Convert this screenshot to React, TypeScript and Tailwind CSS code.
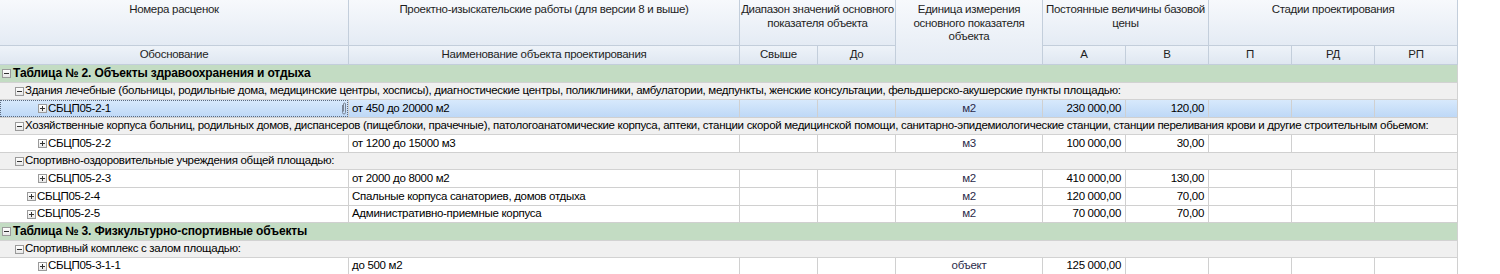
import React from "react";

const GRID =
  "grid w-[1458px] grid-cols-[349px_391px_78px_78px_147px_83px_83px_83px_83px_83px]";

const FONT = {
  fontFamily: '"Liberation Sans", Arial, sans-serif',
};

function Toggle({ open }: { open: boolean }) {
  return (
    <span className="inline-flex h-[9px] w-[9px] shrink-0 items-center justify-center border border-[#9a9a9a] bg-gradient-to-b from-white to-[#e8e8e8]">
      <svg width="7" height="7" viewBox="0 0 7 7">
        <rect x="1" y="3" width="5" height="1" fill="#333" />
        {!open && <rect x="3" y="1" width="1" height="5" fill="#333" />}
      </svg>
    </span>
  );
}

type Row =
  | { kind: "table"; text: string; h: string }
  | { kind: "group"; text: string; h: string }
  | {
      kind: "item";
      code: string;
      indent: string;
      name: string;
      unit: string;
      a: string;
      b: string;
      h: string;
      selected?: boolean;
    };

const rows: Row[] = [
  { kind: "table", text: "Таблица № 2. Объекты здравоохранения и отдыха", h: "h-[18px]" },
  {
    kind: "group",
    text: "Здания лечебные (больницы, родильные дома, медицинские центры, хосписы), диагностические центры, поликлиники, амбулатории, медпункты, женские консультации, фельдшерско-акушерские пункты площадью:",
    h: "h-[17px]",
  },
  {
    kind: "item",
    code: "СБЦП05-2-1",
    indent: "pl-[38px]",
    name: "от 450 до 20000 м2",
    unit: "м2",
    a: "230 000,00",
    b: "120,00",
    h: "h-[18px]",
    selected: true,
  },
  {
    kind: "group",
    text: "Хозяйственные корпуса больниц, родильных домов, диспансеров (пищеблоки, прачечные), патологоанатомические корпуса, аптеки, станции скорой медицинской помощи, санитарно-эпидемиологические станции, станции переливания крови и другие строительным обьемом:",
    h: "h-[17px]",
  },
  {
    kind: "item",
    code: "СБЦП05-2-2",
    indent: "pl-[38px]",
    name: "от 1200 до 15000 м3",
    unit: "м3",
    a: "100 000,00",
    b: "30,00",
    h: "h-[18px]",
  },
  { kind: "group", text: "Спортивно-оздоровительные учреждения общей площадью:", h: "h-[17px]" },
  {
    kind: "item",
    code: "СБЦП05-2-3",
    indent: "pl-[38px]",
    name: "от 2000 до 8000 м2",
    unit: "м2",
    a: "410 000,00",
    b: "130,00",
    h: "h-[18px]",
  },
  {
    kind: "item",
    code: "СБЦП05-2-4",
    indent: "pl-[27px]",
    name: "Спальные корпуса санаториев, домов отдыха",
    unit: "м2",
    a: "120 000,00",
    b: "70,00",
    h: "h-[18px]",
  },
  {
    kind: "item",
    code: "СБЦП05-2-5",
    indent: "pl-[27px]",
    name: "Административно-приемные корпуса",
    unit: "м2",
    a: "70 000,00",
    b: "70,00",
    h: "h-[17px]",
  },
  { kind: "table", text: "Таблица № 3. Физкультурно-спортивные объекты", h: "h-[18px]" },
  { kind: "group", text: "Спортивный комплекс с залом площадью:", h: "h-[17px]" },
  {
    kind: "item",
    code: "СБЦП05-3-1-1",
    indent: "pl-[38px]",
    name: "до 500 м2",
    unit: "объект",
    a: "125 000,00",
    b: "",
    h: "h-[17px]",
  },
];

const hdr =
  "border-r border-b border-[#c3cedb] bg-gradient-to-b from-[#f7f9fc] to-[#e4ebf4] text-center text-[#1e1e1e] pt-[3px]";
const hdr2 =
  "border-r border-b border-[#c3cedb] bg-gradient-to-b from-[#eef3f9] to-[#dfe7f1] flex items-center justify-center text-[#1e1e1e]";

function Header() {
  return (
    <div className={`${GRID} grid-rows-[46px_19px]`}>
      <div className={`${hdr} col-start-1 row-start-1`}>Номера расценок</div>
      <div className={`${hdr} col-start-2 row-start-1`}>
        Проектно-изыскательские работы (для версии 8 и выше)
      </div>
      <div className={`${hdr} col-start-3 col-span-2 row-start-1`}>
        Диапазон значений основного показателя объекта
      </div>
      <div className={`${hdr} col-start-5 row-start-1 row-span-2 px-3`}>
        Единица измерения основного показателя объекта
      </div>
      <div className={`${hdr} col-start-6 col-span-2 row-start-1`}>
        Постоянные величины базовой цены
      </div>
      <div className={`${hdr} col-start-8 col-span-3 row-start-1`}>
        Стадии проектирования
      </div>
      <div className={`${hdr2} col-start-1 row-start-2`}>Обоснование</div>
      <div className={`${hdr2} col-start-2 row-start-2`}>Наименование объекта проектирования</div>
      <div className={`${hdr2} col-start-3 row-start-2`}>Свыше</div>
      <div className={`${hdr2} col-start-4 row-start-2`}>До</div>
      <div className={`${hdr2} col-start-6 row-start-2`}>А</div>
      <div className={`${hdr2} col-start-7 row-start-2`}>В</div>
      <div className={`${hdr2} col-start-8 row-start-2`}>П</div>
      <div className={`${hdr2} col-start-9 row-start-2`}>РД</div>
      <div className={`${hdr2} col-start-10 row-start-2`}>РП</div>
    </div>
  );
}

function Clip() {
  return (
    <svg width="6" height="13" viewBox="0 0 6 13" className="shrink-0">
      <path
        d="M1.5 3 V10.5 A1.5 1.5 0 0 0 4.5 10.5 V2 A1 1 0 0 0 2.5 2 V9.5"
        fill="none"
        stroke="#7b8595"
        strokeWidth="1"
      />
    </svg>
  );
}

function DataRow({ row }: { row: Row }) {
  if (row.kind === "table") {
    return (
      <div
        className={`${row.h} flex w-[1458px] items-center gap-[2px] border-r border-b border-[#d2d2d2] bg-[#c3dcc3] pl-[2px] text-[12px] font-bold tracking-[-0.15px] text-black`}
      >
        <Toggle open />
        <span className="whitespace-nowrap">{row.text}</span>
      </div>
    );
  }
  if (row.kind === "group") {
    return (
      <div
        className={`${row.h} flex w-[1458px] items-center gap-[1px] border-r border-b border-[#d2d2d2] bg-[#f0f0f0] pl-[15px] text-black`}
      >
        <Toggle open />
        <span className="whitespace-nowrap">{row.text}</span>
      </div>
    );
  }
  const cell = "border-r border-b border-[#d0d0d0] flex items-center";
  const bg = row.selected
    ? "bg-gradient-to-b from-[#d7e9fc] to-[#bcd7f6]"
    : "bg-white";
  return (
    <div className={`${GRID} ${row.h} ${bg} text-black`}>
      <div className={`${cell} relative ${row.indent} gap-[1px]`}>
        {row.selected && (
          <div className="pointer-events-none absolute inset-0 border border-dotted border-[#5c6b80]" />
        )}
        <Toggle open={false} />
        <span className="whitespace-nowrap">{row.code}</span>
        {row.selected && (
          <span className="ml-auto mr-[1px] flex">
            <Clip />
          </span>
        )}
      </div>
      <div className={`${cell} pl-[3px]`}>
        <span className="whitespace-nowrap">{row.name}</span>
      </div>
      <div className={cell} />
      <div className={cell} />
      <div className={`${cell} justify-center text-[#2b2b4a]`}>{row.unit}</div>
      <div className={`${cell} justify-end pr-[4px]`}>{row.a}</div>
      <div className={`${cell} justify-end pr-[4px]`}>{row.b}</div>
      <div className={cell} />
      <div className={cell} />
      <div className={cell} />
    </div>
  );
}

export default function App() {
  return (
    <div
      className="h-[274px] w-[1500px] overflow-hidden bg-white text-[11.5px] leading-[13.5px] tracking-[-0.3px]"
      style={FONT}
    >
      <Header />
      {rows.map((r, i) => (
        <DataRow key={i} row={r} />
      ))}
    </div>
  );
}
